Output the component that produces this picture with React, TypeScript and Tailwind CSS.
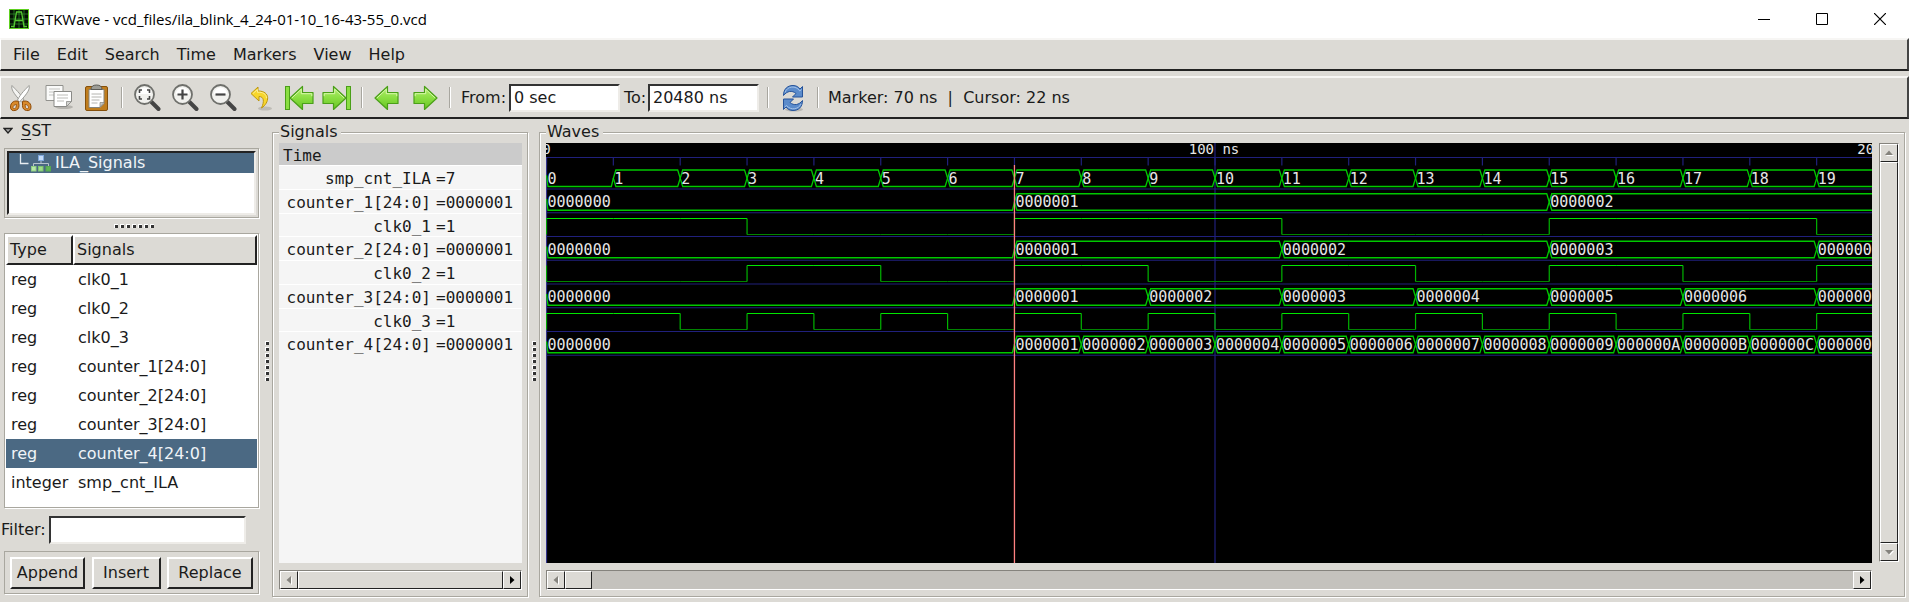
import type { ReactNode } from "react";

type BusSegment = { from: number; to: number; label: string };
type Trace =
  | { kind: "bus"; name: string; value: string; segments: BusSegment[] }
  | { kind: "bit"; name: string; value: string; levels: string };

const END = 20;

const busFrom = (marks: number[], labels: string[]): BusSegment[] =>
  marks.map((from, i) => ({ from, to: marks[i + 1] ?? END, label: labels[i] }));

const traces: Trace[] = [
  {
    kind: "bus",
    name: "smp_cnt_ILA",
    value: "7",
    segments: Array.from({ length: 20 }, (_, i) => ({ from: i, to: i + 1, label: String(i) })),
  },
  {
    kind: "bus",
    name: "counter_1[24:0]",
    value: "0000001",
    segments: busFrom([0, 7, 15], ["0000000", "0000001", "0000002"]),
  },
  { kind: "bit", name: "clk0_1", value: "1", levels: "11100001111000011110" },
  {
    kind: "bus",
    name: "counter_2[24:0]",
    value: "0000001",
    segments: busFrom([0, 7, 11, 15, 19], ["0000000", "0000001", "0000002", "0000003", "0000004"]),
  },
  { kind: "bit", name: "clk0_2", value: "1", levels: "00011001100110011001" },
  {
    kind: "bus",
    name: "counter_3[24:0]",
    value: "0000001",
    segments: busFrom(
      [0, 7, 9, 11, 13, 15, 17, 19],
      ["0000000", "0000001", "0000002", "0000003", "0000004", "0000005", "0000006", "0000007"],
    ),
  },
  { kind: "bit", name: "clk0_3", value: "1", levels: "11010101010101010101" },
  {
    kind: "bus",
    name: "counter_4[24:0]",
    value: "0000001",
    segments: busFrom(
      [0, 7, 8, 9, 10, 11, 12, 13, 14, 15, 16, 17, 18, 19],
      [
        "0000000", "0000001", "0000002", "0000003", "0000004", "0000005", "0000006",
        "0000007", "0000008", "0000009", "000000A", "000000B", "000000C", "000000D",
      ],
    ),
  },
];

const signals = [
  ["reg", "clk0_1"],
  ["reg", "clk0_2"],
  ["reg", "clk0_3"],
  ["reg", "counter_1[24:0]"],
  ["reg", "counter_2[24:0]"],
  ["reg", "counter_3[24:0]"],
  ["reg", "counter_4[24:0]"],
  ["integer", "smp_cnt_ILA"],
];

/* ---------- waveform drawing ---------- */

const STEP = 66.85;
const PITCH = 23.75;
const xAt = (t: number) => 0.5 + t * STEP;

function BusTrace({ y, segments }: { y: number; segments: BusSegment[] }) {
  const hi = y;
  const lo = y + 16.5;
  const mid = (hi + lo) / 2;
  return (
    <g>
      {segments.map((s) => {
        const a = xAt(s.from);
        const b = xAt(s.to);
        const zero = /^0+$/.test(s.label);
        const d = zero
          ? `M${a} ${mid - 3}L${a + 1.5} ${lo}L${b - 2} ${lo}L${b} ${mid}`
          : `M${a} ${mid}L${a + 2.5} ${hi}L${b - 2.5} ${hi}L${b} ${mid}L${b - 2.5} ${lo}L${a + 2.5} ${lo}Z`;
        return (
          <g key={s.from}>
            <path d={d} fill="none" stroke="#00c800" strokeWidth="1.3" />
            <text x={a + 1} y={y + 13.5} fill="#e6e6e6" className="font-['DejaVu_Sans_Mono',monospace] text-[15px]">
              {s.label}
            </text>
          </g>
        );
      })}
    </g>
  );
}

function BitTrace({ y, levels }: { y: number; levels: string }) {
  const hi = Math.round(y) + 0.5;
  const lo = hi + 16;
  return (
    <g strokeWidth="1.2">
      <path d={`M${xAt(0)} ${hi}V${lo}`} stroke="#00a800" />
      {levels.split("").map((v, i) => (
        <g key={i}>
          <path
            d={`M${xAt(i)} ${v === "1" ? hi : lo}H${xAt(i + 1)}`}
            stroke={v === "1" ? "#00e600" : "#008400"}
          />
          {i > 0 && levels[i - 1] !== v && <path d={`M${xAt(i)} ${hi}V${lo}`} stroke="#00b400" />}
        </g>
      ))}
    </g>
  );
}

function WaveCanvas() {
  return (
    <svg className="block h-[420px] w-full shrink-0 overflow-hidden bg-black" role="img" aria-label="Waveforms">
      <g stroke="#20207c" strokeWidth="1.2">
        <path d="M0 14.5H4000" />
        {Array.from({ length: 20 }, (_, i) => (
          <path key={i} d={`M${xAt(i)} 14.5V22.5`} />
        ))}
        {traces.map((t, i) => (
          <path key={t.name} d={`M0 ${46 + i * PITCH}H4000`} />
        ))}
        <path d="M.5 14V420" stroke="#34348c" />
        <path d={`M${xAt(10)} 0V420`} />
      </g>
      <g fill="#e6e6e6" textAnchor="middle" className="font-['DejaVu_Sans_Mono',monospace] text-[14px]">
        <text x={xAt(0)} y="11">0</text>
        <text x={xAt(10) - 1} y="11">100 ns</text>
        <text x={xAt(20) - 1} y="11">200 ns</text>
      </g>
      {traces.map((t, i) =>
        t.kind === "bus" ? (
          <BusTrace key={t.name} y={27 + i * PITCH} segments={t.segments} />
        ) : (
          <BitTrace key={t.name} y={27 + i * PITCH} levels={t.levels} />
        ),
      )}
      <path d={`M${xAt(7)} 22V420`} stroke="#ff8080" strokeWidth="1.3" />
    </svg>
  );
}

/* ---------- icons ---------- */

function Icon({ children }: { children: ReactNode }) {
  return (
    <svg viewBox="0 0 28 28" className="h-7 w-7" aria-hidden="true">
      {children}
    </svg>
  );
}

const CutIcon = () => (
  <Icon>
    <path d="M5 1.5C4 5 6 9 14.500 18L17 16C13 9 8 5 5 1.500Z" fill="#f4f4f2" stroke="#9a9a96" />
    <path d="M22 1.500C23 5 21 9 12.500 18L10.500 16C14 9 19 5 22 1.500Z" fill="#fff" stroke="#9a9a96" />
    <path d="M11.500 17.500C8 16 3.500 18 3.500 23c0 3 2 4 4.500 3.500s4-2 4-5zM15.500 17.500C19 16 24 18 24 23c0 3-2 4-4.500 3.500s-4-2-4-5z" fill="#d98a2b" stroke="#8f4a06" />
    <path d="M9.500 20.500c-2 0-3.500 1.200-3.500 3s2 1.500 3 0zM18 20.500c2 0 3.500 1.200 3.500 3s-2 1.500-3 0z" fill="#dcdad5" stroke="#8f4a06" strokeWidth=".8" />
  </Icon>
);

const CopyIcon = () => (
  <Icon>
    <ellipse cx="19" cy="23" rx="9" ry="2" fill="#b5b3ae" />
    <path d="M1 1.500h17v15H1z" fill="#fafaf9" stroke="#92928e" />
    <path d="M4 5h11M4 8h11M4 11h6" stroke="#c4c4c1" />
    <path d="M9 7.500h17.500v10l-5 5H9z" fill="#fff" stroke="#8a8a86" />
    <path d="M12 11h11M12 14h11M12 17h7" stroke="#bcbcb8" />
    <path d="M26.500 17.500h-5v5z" fill="#d5d5d2" stroke="#8a8a86" strokeWidth=".8" />
  </Icon>
);

const PasteIcon = () => (
  <Icon>
    <rect x="2.500" y="2.500" width="22" height="24" rx="1.500" fill="#bf7d1e" stroke="#85500b" />
    <path d="M6 5.500h15v14l-4 4H6z" fill="#fff" stroke="#85857f" />
    <path d="M8.500 10h10M8.500 13h10M8.500 16h8M8.500 19h6" stroke="#b4b4b0" />
    <path d="M21 18.500h-4v4.500z" fill="#c8c8c4" stroke="#85857f" strokeWidth=".7" />
    <path d="M8 5.500c0-3 2-4.500 5.500-4.500S19 2.500 19 5.500z" fill="#9c9c96" stroke="#5c5c57" />
  </Icon>
);

const Lens = ({ children }: { children: ReactNode }) => (
  <Icon>
    <path d="M18.500 18L25.500 25" stroke="#454545" strokeWidth="4" strokeLinecap="round" />
    <circle cx="11.500" cy="10.500" r="9.500" fill="#f1f1ee" stroke="#6f706c" strokeWidth="1.800" />
    <path d="M5 10a6.500 6.500 0 0 1 13 0z" fill="#fff" />
    {children}
  </Icon>
);

const UndoIcon = () => (
  <Icon>
    <ellipse cx="18" cy="24.500" rx="7" ry="2" fill="#bebcb6" />
    <path d="M11 3L4 9.500l8 7.500v-4.500c5 0 5.500 5 2.500 11.500 8-5 9.500-17-3.500-17z" fill="#f7d62c" stroke="#bd9711" strokeLinejoin="round" />
    <path d="M6 9.500l4.500-4v2.800c5-.5 9 1.500 9 6" fill="none" stroke="#fdf0a0" strokeWidth=".9" />
  </Icon>
);

const GreenDefs = () => (
  <defs>
    <linearGradient id="green" x1="0" y1="0" x2="0" y2="1">
      <stop offset="0" stopColor="#b6ee72" />
      <stop offset=".5" stopColor="#8ade42" />
      <stop offset="1" stopColor="#66c422" />
    </linearGradient>
  </defs>
);

const GreenArrow = ({ bar = false, flip = false }: { bar?: boolean; flip?: boolean }) => (
  <svg viewBox="0 0 30 28" className="h-7 w-[30px]" aria-hidden="true">
    <GreenDefs />
    <g transform={flip ? "matrix(-1 0 0 1 30 0)" : undefined}>
      {bar && <rect x="1.500" y="2.500" width="4" height="23" fill="#8ade42" stroke="#4a9f18" />}
      <g transform={bar ? "translate(3 0)" : undefined}>
        <path d="M3 14L15.500 2.500v6H26v11H15.500v6z" fill="url(#green)" stroke="#4a9f18" strokeWidth="1.200" strokeLinejoin="round" />
        <path d="M4.800 14L14.300 5.200v4.500h10.500v2.500" fill="none" stroke="#d6f7a8" />
      </g>
    </g>
  </svg>
);

const RefreshIcon = () => (
  <Icon>
    <ellipse cx="15" cy="25.500" rx="9" ry="2" fill="#b9b8b4" />
    <g fill="#5b8bcb" stroke="#26539a" strokeLinejoin="round">
      <path d="M4.500 11.500C4.500 5 8.500 1.500 14 1.500c3.500 0 5.500 1.500 7 3.500l2.500-2.500V13H13.500l3.500-3.500C13 6 8 7 4.500 11.500Z" />
      <path d="M23.500 16.500c0 6.500-4 10-9.500 10-3.500 0-5.500-1.500-7-3.500l-2.500 2.500V15h10L11 18.500c4 3.500 9 2.500 12.500-2Z" />
    </g>
    <path d="M6 8.500C8 2 17 1 20.800 7l1.700-1.500M22 20c-2 5-10 7-14.500 1.500L5.700 23" fill="none" stroke="#a9c6ea" strokeWidth=".9" />
  </Icon>
);

const AppIcon = () => (
  <svg viewBox="0 0 20 20" className="h-5 w-5" aria-hidden="true">
    <rect x=".5" y=".5" width="19" height="19" fill="#041004" stroke="#5fd020" />
    <path d="M5 1v18M10 1v18M15 1v18M1 5h18M1 10h18M1 15h18" stroke="#2c8a26" strokeWidth=".8" />
    <path d="M2 17.500h3L7.500 3h5L15 17.500h3M6.500 11.500h7" fill="none" stroke="#55c832" strokeWidth="1.300" />
  </svg>
);

const TreeIcon = () => (
  <svg viewBox="0 0 20 18" className="h-[18px] w-5" aria-hidden="true">
    <path d="M10 6v4M2.500 12v-2.500h15V12" fill="none" stroke="#b7c2cc" />
    <rect x="7.500" y="1.500" width="5" height="5" fill="#c4dcf8" stroke="#7fa7dc" />
    <rect x=".5" y="12.500" width="4.500" height="4.500" fill="#b9e8a8" stroke="#8fcf80" />
    <rect x="7.500" y="12.500" width="4.500" height="4.500" fill="#9fdc8c" stroke="#7cc56c" />
    <rect x="15" y="12.500" width="4.500" height="4.500" fill="#5fb556" stroke="#57a850" />
  </svg>
);

/* ---------- widgets ---------- */

function ToolButton({ label, children }: { label: string; children: ReactNode }) {
  return (
    <button type="button" aria-label={label} className="flex h-9 w-[38px] shrink-0 items-center justify-center">
      {children}
    </button>
  );
}

const Separator = () => (
  <div className="flex w-3 shrink-0 justify-center self-stretch py-[9px]">
    <div className="w-[2px] border-l border-[#a8a69f] bg-white" />
  </div>
);

function Grip({ count, vertical = false }: { count: number; vertical?: boolean }) {
  return (
    <div className={vertical ? "flex flex-col gap-[2px]" : "flex gap-[2px]"} aria-hidden="true">
      {Array.from({ length: count }, (_, i) => (
        <div key={i} className="h-1 w-1 border-t border-l border-white bg-[#333]" />
      ))}
    </div>
  );
}

function Frame({ title, className, children }: { title: string; className: string; children: ReactNode }) {
  return (
    <section
      className={`mt-[13px] mb-[5px] flex flex-col border border-[#a9a79f] pr-[5px] pb-[6px] pl-[6px] shadow-[inset_1px_1px_0_#fff,1px_1px_0_#fff] ${className}`}
    >
      <h2 className="-mt-[13px] h-[23px] self-start bg-[#dcdad5] pr-1 pl-[1px] leading-[23px]">{title}</h2>
      {children}
    </section>
  );
}

function Arrow({ dir, disabled = false }: { dir: "up" | "down" | "left" | "right"; disabled?: boolean }) {
  const paths = {
    up: "M1 7L5 2.500L9 7Z",
    down: "M1 3L5 7.500L9 3Z",
    left: "M7 1L2.500 5L7 9Z",
    right: "M3 1L7.500 5L3 9Z",
  };
  return (
    <button
      type="button"
      aria-label={`Scroll ${dir}`}
      className="flex h-[18px] w-[18px] shrink-0 items-center justify-center border border-t-white border-r-[#222] border-b-[#222] border-l-white bg-[#dcdad5]"
    >
      <svg viewBox="0 0 10 10" className="h-[10px] w-[10px]" aria-hidden="true">
        {disabled && <path d={paths[dir]} fill="#fff" transform="translate(1 1)" />}
        <path d={paths[dir]} fill={disabled ? "#85837d" : "#000"} />
      </svg>
    </button>
  );
}

function HScroll({ full = false }: { full?: boolean }) {
  return (
    <div className="flex h-5 border border-t-[#85837d] border-r-white border-b-white border-l-[#85837d] bg-[#c4c2bd]">
      <Arrow dir="left" disabled />
      <div
        className={`border border-t-white border-r-[#222] border-b-[#222] border-l-white bg-[#dcdad5] ${full ? "flex-1" : "mr-auto w-[27px]"}`}
      />
      <Arrow dir="right" />
    </div>
  );
}

const entry =
  "shrink-0 border-2 border-t-[#333] border-r-[#eeece8] border-b-[#eeece8] border-l-[#333] bg-white px-[3px] outline-none";
const raised = "border-2 border-t-white border-r-[#222] border-b-[#222] border-l-white";
const bar =
  "flex items-center border-t-2 border-r-2 border-b-2 border-l border-t-[#f7f6f4] border-r-[#444] border-b-[#222] border-l-white";
const etched = "border border-[#a9a79f] shadow-[1px_1px_0_#fff]";

/* ---------- panels ---------- */

function SignalTree() {
  return (
    <aside className="flex w-[261px] shrink-0 flex-col pr-[2px]">
      <div className="flex h-[29px] items-start pl-[3px]">
        <svg viewBox="0 0 10 8" className="mt-2 mr-2 h-2 w-[10px]" aria-hidden="true">
          <path d="M1 1.500h8L5 6Z" fill="#aaa" stroke="#222" strokeWidth="1.300" />
        </svg>
        <h2 className="leading-6">
          <span className="underline underline-offset-[3px]">S</span>ST
        </h2>
      </div>
      <div className={`ml-1 h-[70px] p-[2px] ${etched}`}>
        <div className="h-full border-2 border-t-[#222] border-r-[#eeece8] border-b-[#eeece8] border-l-[#222] bg-white">
          <div className="flex h-5 items-center bg-[#4b6983] text-[#f0f4f8]">
            <svg viewBox="0 0 22 20" className="h-5 w-[22px]" aria-hidden="true">
              <path d="M11.500 1v9.500h8" fill="none" stroke="#e8edf1" strokeWidth="1.300" />
            </svg>
            <TreeIcon />
            <span className="pl-1 leading-5">ILA_Signals</span>
          </div>
        </div>
      </div>
      <div className="flex h-[15px] items-center justify-center pl-[9px]">
        <Grip count={7} />
      </div>
      <div className={`ml-1 min-h-[274px] flex-1 bg-white p-[1px] ${etched}`}>
        <table className="w-full table-fixed border-separate border-spacing-0 text-left">
          <thead>
            <tr className="h-[30px] bg-[#dcdad5]">
              <th className={`w-[67px] p-0 pl-[2px] font-normal ${raised}`}>Type</th>
              <th className={`p-0 pl-[2px] font-normal ${raised}`}>Signals</th>
            </tr>
          </thead>
          <tbody>
            {signals.map(([type, name]) => (
              <tr
                key={name}
                className={name === "counter_4[24:0]" ? "h-[29px] bg-[#4b6983] text-[#f0f4f8]" : "h-[29px]"}
              >
                <td className="p-0 pl-[5px]">{type}</td>
                <td className="p-0 pl-[5px]">{name}</td>
              </tr>
            ))}
          </tbody>
        </table>
      </div>
      <div className="mt-2 flex items-center pl-[1px]">
        <label htmlFor="filter" className="w-12 shrink-0">Filter:</label>
        <input id="filter" className={`h-7 w-[197px] ${entry}`} />
      </div>
      <div className={`mt-[7px] mb-2 ml-1 flex h-[43px] items-center justify-between px-[5px] ${etched}`}>
        <button type="button" className={`h-8 w-[75px] ${raised}`}>Append</button>
        <button type="button" className={`h-8 w-[69px] ${raised}`}>Insert</button>
        <button type="button" className={`h-8 w-[86px] ${raised}`}>Replace</button>
      </div>
    </aside>
  );
}

function SignalNames() {
  return (
    <Frame title="Signals" className="w-[256px] shrink-0">
      <div className="h-[420px] bg-[#f5f5f5] font-['DejaVu_Sans_Mono',monospace] text-[16px]">
        <div className="h-[22px] bg-[#cbcbcb] pl-1 leading-[26px]">Time</div>
        <div className="grid h-[190px] grid-rows-8">
          {traces.map((t) => (
            <div key={t.name} className="flex items-start border-t border-white leading-[25px]">
              <span className="w-[152px] text-right">{t.name}</span>
              <span className="pl-[5px]">={t.value}</span>
            </div>
          ))}
        </div>
      </div>
      <div className="mt-[7px]">
        <HScroll full />
      </div>
    </Frame>
  );
}

function Waves() {
  return (
    <Frame title="Waves" className="mr-1 min-w-0 flex-1">
      <div className="flex">
        <div className="flex min-w-0 flex-1 flex-col">
          <WaveCanvas />
          <div className="mt-[7px]">
            <HScroll />
          </div>
        </div>
        <div className="mb-7 ml-[7px] flex w-5 flex-col border border-t-[#85837d] border-r-white border-b-white border-l-[#85837d] bg-[#c4c2bd]">
          <Arrow dir="up" disabled />
          <div className="flex-1 border border-t-white border-r-[#222] border-b-[#222] border-l-white bg-[#dcdad5]" />
          <Arrow dir="down" disabled />
        </div>
      </div>
    </Frame>
  );
}

export default function App() {
  return (
    <div className="flex min-h-screen flex-col bg-[#dcdad5] font-['DejaVu_Sans',sans-serif] text-[16px] leading-6 text-[#1a1a1a]">
      <header className="flex h-[38px] items-center bg-white pl-[9px] text-black">
        <AppIcon />
        <h1 className="pl-[5px] font-['Open_Sans','Noto_Sans',sans-serif] text-[15px]">
          GTKWave - vcd_files/ila_blink_4_24-01-10_16-43-55_0.vcd
        </h1>
        <div className="ml-auto flex">
          <button type="button" aria-label="Minimize" className="flex h-9 w-[58px] items-center justify-center">
            <svg viewBox="0 0 12 12" className="h-3 w-3"><path d="M0 6.500h12" stroke="#000" /></svg>
          </button>
          <button type="button" aria-label="Maximize" className="flex h-9 w-[58px] items-center justify-center">
            <svg viewBox="0 0 12 12" className="h-3 w-3"><path d="M.5.5h11v11H.5z" fill="none" stroke="#000" /></svg>
          </button>
          <button type="button" aria-label="Close" className="flex h-9 w-[58px] items-center justify-center">
            <svg viewBox="0 0 12 12" className="h-3 w-3"><path d="M0 0L12 12M12 0L0 12" stroke="#000" strokeWidth="1.200" /></svg>
          </button>
        </div>
      </header>

      <nav className={`h-[33px] gap-[17px] pl-[12px] ${bar}`}>
        {["File", "Edit", "Search", "Time", "Markers", "View", "Help"].map((item) => (
          <button key={item} type="button">{item}</button>
        ))}
      </nav>

      <div className={`mt-[5px] h-[43px] pl-[1px] ${bar}`}>
        <ToolButton label="Cut"><CutIcon /></ToolButton>
        <ToolButton label="Copy"><CopyIcon /></ToolButton>
        <ToolButton label="Paste"><PasteIcon /></ToolButton>
        <Separator />
        <ToolButton label="Zoom fit">
          <Lens>
            <path d="M6.500 9V6H9M14 6h2.500v3M16.500 12v3H14M9 15H6.500v-3" fill="none" stroke="#444" strokeWidth="1.600" />
          </Lens>
        </ToolButton>
        <ToolButton label="Zoom in">
          <Lens><path d="M6.500 10.500h10M11.500 5.500v10" stroke="#444" strokeWidth="2.200" /></Lens>
        </ToolButton>
        <ToolButton label="Zoom out">
          <Lens><path d="M6.500 10.500h10" stroke="#444" strokeWidth="2.200" /></Lens>
        </ToolButton>
        <ToolButton label="Zoom undo"><UndoIcon /></ToolButton>
        <ToolButton label="To start"><GreenArrow bar /></ToolButton>
        <ToolButton label="To end"><GreenArrow bar flip /></ToolButton>
        <Separator />
        <ToolButton label="Previous edge"><GreenArrow /></ToolButton>
        <ToolButton label="Next edge"><GreenArrow flip /></ToolButton>
        <Separator />
        <div className="flex shrink-0 items-center pr-[3px] pl-[5px]">
          <label htmlFor="from" className="w-12 shrink-0 whitespace-nowrap">From:</label>
          <input id="from" defaultValue="0 sec" className={`mr-1 h-7 w-[111px] ${entry}`} />
          <label htmlFor="to" className="w-6 shrink-0 whitespace-nowrap">To:</label>
          <input id="to" defaultValue="20480 ns" className={`h-7 w-[111px] ${entry}`} />
        </div>
        <Separator />
        <ToolButton label="Reload"><RefreshIcon /></ToolButton>
        <Separator />
        <span className="pl-1 whitespace-pre">{"Marker: 70 ns  |  Cursor: 22 ns"}</span>
      </div>

      <main className="flex flex-1">
        <SignalTree />
        <div className="flex w-[11px] shrink-0 items-center justify-center">
          <Grip count={7} vertical />
        </div>
        <SignalNames />
        <div className="flex w-[11px] shrink-0 items-center justify-center">
          <Grip count={7} vertical />
        </div>
        <Waves />
      </main>
    </div>
  );
}
